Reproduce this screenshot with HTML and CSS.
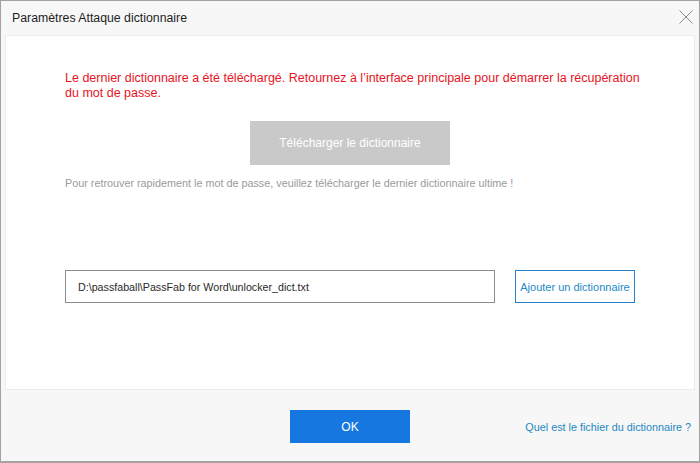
FILE: index.html
```html
<!DOCTYPE html>
<html lang="fr">
<head>
  <meta charset="UTF-8" />
  <title>Paramètres Attaque dictionnaire</title>
  <link rel="stylesheet" href="styles.css">
</head>
<body>
  <div class="window">
    <div class="titlebar">
      <span class="title">Paramètres Attaque dictionnaire</span>
      <svg class="close" width="14" height="14" viewBox="0 0 14 14">
        <path d="M0.5 0.5 L13.5 13.5 M13.5 0.5 L0.5 13.5" stroke="#8a8a8a" stroke-width="1" fill="none" />
      </svg>
    </div>

    <div class="content">
      <p class="notice">Le dernier dictionnaire a été téléchargé. Retournez à l’interface principale pour démarrer la récupération du mot de passe.</p>
      <button class="download" disabled>Télécharger le dictionnaire</button>
      <p class="hint">Pour retrouver rapidement le mot de passe, veuillez télécharger le dernier dictionnaire ultime !</p>

      <div class="dict-row">
        <input type="text" class="dict-path" value="D:\passfaball\PassFab for Word\unlocker_dict.txt">
        <button class="add-dict">Ajouter un dictionnaire</button>
      </div>
    </div>

    <div class="footer">
      <span></span>
      <button class="ok">OK</button>
      <a class="help" href="#">Quel est le fichier du dictionnaire ?</a>
    </div>
  </div>
</body>
</html>
```

FILE: styles.css
```css
html, body {
  margin: 0;
  padding: 0;
}
body {
  font-family: "Liberation Sans", Arial, sans-serif;
  font-size: 12px;
  background: #fff;
}
.window {
  width: 700px;
  height: 463px;
  box-sizing: border-box;
  border: 1px solid #a3a3a3;
  border-bottom-width: 2px;
  background: #f7f7f7;
  display: flex;
  flex-direction: column;
}
.titlebar {
  height: 34px;
  display: flex;
  align-items: center;
  justify-content: space-between;
  padding: 0 6px 0 11px;
}
.title {
  color: #1e1e1e;
  font-size: 12.3px;
}
.close {
  display: block;
  margin-top: -3px;
}
.content {
  margin: 0 4px;
  height: 355px;
  box-sizing: border-box;
  background: #fff;
  border: 1px solid #ececec;
  padding: 35px 59px 0;
}
.notice {
  margin: 0 -9px 0 0;
  color: #e8131e;
  font-size: 12.5px;
  line-height: 15px;
}
.download {
  display: block;
  width: 200px;
  height: 44px;
  margin: 20px auto 0;
  border: none;
  background: #c9c9c9;
  color: #fff;
  font-family: inherit;
  font-size: 12px;
}
.hint {
  margin: 11px 0 0;
  color: #9a9a9a;
  font-size: 10.8px;
  line-height: 15px;
}
.dict-row {
  display: flex;
  gap: 20px;
  margin-top: 79px;
}
.dict-path {
  width: 430px;
  height: 33px;
  box-sizing: border-box;
  border: 1px solid #8c8c8c;
  padding: 0 12px;
  font-family: inherit;
  font-size: 10.7px;
  color: #2a2a2a;
  outline: none;
}
.add-dict {
  width: 120px;
  height: 33px;
  box-sizing: border-box;
  border: 1px solid #2a7fc9;
  background: #fff;
  color: #238ac4;
  font-family: inherit;
  font-size: 11px;
  padding: 0;
}
.footer {
  flex: 1;
  display: grid;
  grid-template-columns: 1fr auto 1fr;
  align-items: center;
  padding: 2px 8px 0 8px;
}
.ok {
  width: 120px;
  height: 33px;
  border: none;
  background: #1677e0;
  color: #fff;
  font-family: inherit;
  font-size: 12px;
}
.help {
  justify-self: end;
  color: #1f88c2;
  font-size: 10.8px;
  text-decoration: none;
}
```
